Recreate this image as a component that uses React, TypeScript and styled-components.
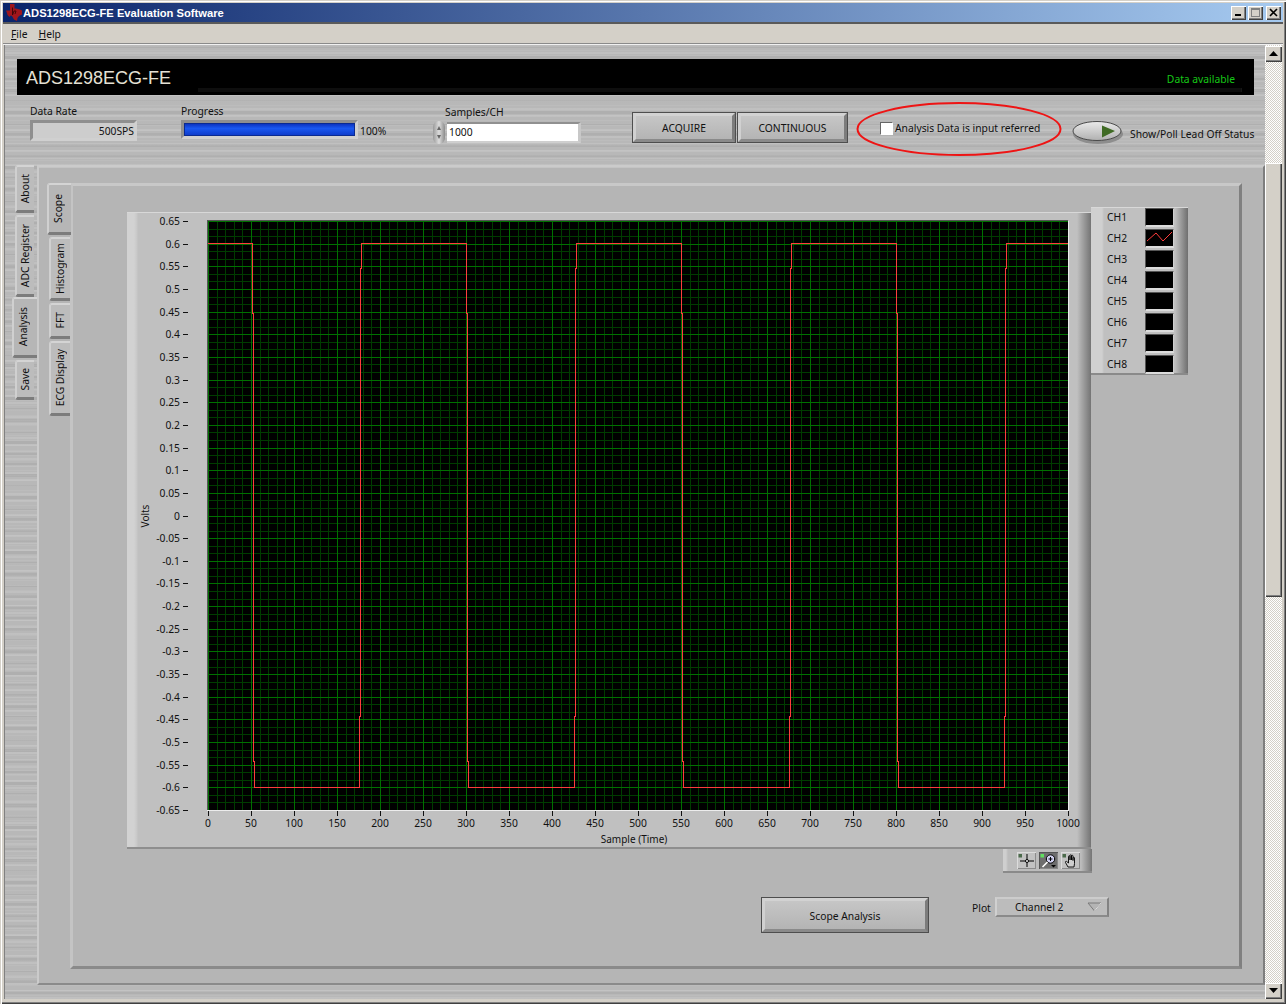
import React from "react";
import styled, { createGlobalStyle } from "styled-components";

const UI = `"Noto Sans", "DejaVu Sans", sans-serif`;
const FS = "10.3px";

const Global = createGlobalStyle`
  html, body { margin: 0; padding: 0; background: #d4d0c8; overflow: hidden; }
  * { box-sizing: border-box; }
  body { font-family: ${UI}; font-size: ${FS}; color: #111; }
`;

const Window = styled.div`
  width: 1286px; height: 1004px; background: #d4d0c8; display: flex; flex-direction: column;
  padding: 3px 3px 5px 3px;
  box-shadow: inset 1px 1px 0 #d4d0c8, inset 2px 2px 0 #fff, inset -1px -1px 0 #404040, inset -2px -2px 0 #808080;
`;
const TitleBar = styled.div`
  height: 19px; flex: none; display: flex; align-items: center; padding: 0 2px 0 3px; gap: 1px;
  background: linear-gradient(90deg, #0a246a 0%, #a6caf0 100%);
`;
const TitleText = styled.span`
  font: bold 11.2px "Liberation Sans", sans-serif; color: #fff; flex: 1; white-space: nowrap;
`;
const WinButton = styled.div<{ $gap?: number }>`
  width: 15px; height: 14px; margin-left: ${p => p.$gap ?? 1}px; background: #d4d0c8; display: flex; align-items: center; justify-content: center;
  box-shadow: inset 1px 1px 0 #fff, inset -1px -1px 0 #404040, inset -2px -2px 0 #808080;
`;
const Client = styled.div`
  flex: 1; display: flex; flex-direction: column; border-top: 2px solid #5a5a5a; min-height: 0;
`;
const MenuBar = styled.div`
  height: 20px; flex: none; display: flex; gap: 11px; align-items: center; padding-left: 8px;
  background: #d4d0c8; border-bottom: 1px solid #8a8a8a; font: ${FS} ${UI}; color: #111;
  box-shadow: 0 1px 0 #f0f0f0;
`;
const MenuItem = styled.span`
  &::first-letter { text-decoration: underline; }
`;
const Body = styled.div`
  flex: 1; display: flex; min-height: 0; margin: 1px 1px 0 1px; border-left: 1px solid #808080;
`;
const Canvas = styled.div`
  flex: 1; min-width: 0; display: flex; flex-direction: column; padding-top: 14px;
  background-color: #b8b8b8;
  background-image:
    repeating-linear-gradient(180deg, rgba(255,255,255,.11) 0 2px, transparent 2px 7px),
    repeating-linear-gradient(180deg, rgba(0,0,0,.05) 0 3px, transparent 3px 11px),
    repeating-linear-gradient(180deg, rgba(255,255,255,.06) 0 1px, transparent 1px 5px);
`;
const Banner = styled.div`
  position: relative; height: 36px; margin: 0 11px 0 12px; background: #000; flex: none;
  display: flex; align-items: center; justify-content: space-between; padding: 2px 19px 0 9px;
  &::after {
    content: ""; position: absolute; left: 181px; right: 12px; bottom: 3px; height: 4px;
    background: #0e0e0e; border-right: 1px solid #161616;
  }
`;
const BannerTitle = styled.span`
  font: 18px "Liberation Sans", sans-serif; color: #e4e0d4;
`;
const BannerStatus = styled.span`
  font: ${FS} ${UI}; color: #16c816; padding-top: 2px; position: relative; z-index: 1;
`;
const Controls = styled.div`
  position: relative; height: 70px; flex: none; display: flex; align-items: flex-start; padding-left: 25px;
`;
const Field = styled.div<{ $w: number; $mr: number; $top: number }>`
  width: ${p => p.$w}px; margin-right: ${p => p.$mr}px; margin-top: ${p => p.$top}px; flex: none;
`;
const FieldLabel = styled.div<{ $ml?: number }>`
  font: ${FS}/13px ${UI}; height: 15px; margin-left: ${p => p.$ml ?? 0}px; white-space: nowrap;
`;
const Sunken = styled.div<{ $bg: string }>`
  border: 3px solid; border-color: #8f8f8f #d0d0d0 #d0d0d0 #8f8f8f; background: ${p => p.$bg};
`;
const RateBox = styled(Sunken)`
  height: 21px; display: flex; align-items: center; justify-content: flex-end; font: ${FS} ${UI};
`;
const ProgressRow = styled.div`
  display: flex; align-items: center; gap: 2px;
`;
const ProgressTrack = styled(Sunken)`
  width: 177px; height: 19px;
`;
const ProgressFill = styled.div`
  height: 100%; border: 1px solid #0a2a90;
  background: linear-gradient(180deg, #0c34c0 0%, #1a58f0 40%, #0e3ccc 100%);
`;
const Percent = styled.span`
  font: ${FS} ${UI}; padding-top: 2px;
`;
const SpinRow = styled.div`
  display: flex; align-items: center; gap: 2px;
`;
const Spinner = styled.div`
  width: 12px; height: 23px; border-radius: 6px; background: linear-gradient(90deg, #9a9a9a, #dcdcdc 50%, #8c8c8c);
  display: flex; flex-direction: column; align-items: center; justify-content: space-around; padding: 3px 0;
`;
const SpinUp = styled.i`
  width: 0; height: 0; border-left: 2.5px solid transparent; border-right: 2.5px solid transparent; border-bottom: 4px solid #666;
`;
const SpinDown = styled.i`
  width: 0; height: 0; border-left: 2.5px solid transparent; border-right: 2.5px solid transparent; border-top: 4px solid #666;
`;
const SamplesBox = styled(Sunken)`
  width: 134px; height: 21px; font: ${FS}/16px ${UI}; padding-left: 2px; border-width: 2px 3px 2px 0; border-color: #909090 #c8c8c8 #cfcfcf #909090;
`;
const BevelButton = styled.div<{ $w: number; $h: number }>`
  width: ${p => p.$w}px; height: ${p => p.$h}px; flex: none; display: flex; align-items: center; justify-content: center;
  font: ${FS} ${UI}; color: #111; background: linear-gradient(180deg, #c6c6c6, #b4b4b4);
  border: 4px solid; border-color: #d2d2d2 #7c7c7c #8a8a8a #d0d0d0; outline: 1px solid #4e4e4e; outline-offset: -1px;
`;
const ButtonGroup = styled.div`
  display: flex; gap: 1px; margin-top: 17px; margin-right: 32px; flex: none;
`;
const CheckArea = styled.div`
  display: flex; align-items: center; gap: 2px; margin-top: 26px; margin-right: 32px; flex: none; width: 160px;
`;
const CheckBox = styled.div`
  width: 13px; height: 13px; background: #fff; flex: none;
  border: 1px solid; border-color: #666 #fff #fff #666;
`;
const CheckText = styled.span`
  font: ${FS} ${UI}; white-space: nowrap;
`;
const LeadOff = styled.div`
  display: flex; align-items: center; gap: 6px; margin-top: 25px; flex: none;
`;
const LeadText = styled.span`
  font: ${FS} ${UI}; white-space: nowrap; padding-top: 2px;
`;
const Annotation = styled.svg`
  position: absolute; left: 851px; top: 6px; pointer-events: none;
`;
const Main = styled.div`
  flex: 1; min-height: 0; display: flex; margin-bottom: 14px;
`;
const OuterTabs = styled.div`
  width: 32px; flex: none; display: flex; flex-direction: column; padding-left: 10px; align-items: flex-start;
`;
const Tab = styled.div<{ $h: number; $on?: boolean; $w: number; $ml?: number; $gap?: number }>`
  width: ${p => p.$w}px; height: ${p => p.$h}px; margin-left: ${p => p.$ml ?? 0}px; margin-bottom: ${p => p.$gap ?? 2}px; flex: none;
  display: flex; align-items: center; justify-content: center; padding-right: ${p => p.$on ? 5 : 2}px;
  background: ${p => p.$on ? "#b6b6b6" : "#bcbcbc"};
  border-top: 2px solid #d4d4d4; border-left: 2px solid #d0d0d0; border-bottom: 3px solid #7c7c7c;
  border-radius: 3px 0 0 3px; font: ${FS} ${UI}; position: relative; z-index: 1;
`;
const TabText = styled.span`
  writing-mode: vertical-rl; transform: rotate(180deg); white-space: nowrap;
`;
const OuterPanel = styled.div`
  flex: 1; min-width: 0; display: flex; background: #b5b5b5; padding: 16px 21px 14px 8px;
  border: 2px solid; border-color: #cbcbcb #7e7e7e #8a8a8a #cbcbcb; box-shadow: inset 0 1px 0 #c4c4c4;
`;
const InnerTabs = styled.div`
  width: 23px; flex: none; display: flex; flex-direction: column; align-items: flex-start;
`;
const InnerPanel = styled.div`
  flex: 1; min-width: 0; display: flex; flex-direction: column; padding: 26px 0 0 54px;
  border: 3px solid; border-color: #c8c8c8 #808080 #8a8a8a #c4c4c4; background: #b5b5b5;
`;
const GraphRow = styled.div`
  display: flex; align-items: flex-start; flex: none;
`;
const GraphColumn = styled.div`
  width: 964px; flex: none; display: flex; flex-direction: column; align-items: flex-end;
`;
const GraphPanel = styled.div`
  width: 964px; height: 637px;
  background: linear-gradient(90deg, #d2d2d2 0 7px, #c8c8c8 10px, #c0c0c0 11px, #c0c0c0 calc(100% - 14px), #747474 100%);
  border-top: 1px solid #d8d8d8; border-bottom: 2px solid #8e8e8e;
`;
const ChartSvg = styled.svg`
  display: block; margin-top: -1px; font-family: ${UI}; font-size: ${FS};
`;
const Palette = styled.div`
  width: 89px; height: 24px; margin-right: -1px; display: flex; gap: 3px; align-items: center; padding: 0 13px 0 14px;
  background: linear-gradient(90deg, #cfcfcf 0 3px, #bcbcbc 5px, #bcbcbc 78px, #757575 100%);
  border-bottom: 2px solid #8a8a8a;
`;
const PaletteButton = styled.div<{ $on?: boolean }>`
  width: 19px; height: 17px; flex: none; display: flex; align-items: center; justify-content: center;
  background: ${p => p.$on ? "#6e6e6e" : "#c2c2c2"};
  box-shadow: inset 1px 1px 0 ${p => p.$on ? "#555" : "#dcdcdc"}, inset -1px -1px 0 ${p => p.$on ? "#888" : "#8c8c8c"};
`;
const Legend = styled.div`
  width: 97px; height: 168px; margin-top: -5px; flex: none; padding: 0 14px 0 16px;
  display: flex; flex-direction: column;
  background: linear-gradient(90deg, #d0d0d0 0 11px, #c0c0c0 13px, #c0c0c0 84px, #6f6f6f 100%);
  box-shadow: inset 0 1px 0 #d8d8d8, inset 0 -2px 0 #8a8a8a;
`;
const LegendRow = styled.div`
  height: 21px; flex: none; display: flex; align-items: center; justify-content: space-between; font: ${FS} ${UI};
`;
const LegendName = styled.span`
  padding-bottom: 2px;
`;
const Swatch = styled.div`
  width: 29px; height: 19px; background: #000; border-top: 1px solid #555; border-left: 1px solid #555;
  border-bottom: 2px solid #dcdcdc; border-right: 1px solid #cfcfcf;
`;
const BottomRow = styled.div`
  display: flex; align-items: flex-start; margin: 24px 0 0 634px;
`;
const ScopeLabel = styled.span`
  padding-top: 2px;
`;
const PlotLabel = styled.span`
  font: ${FS} ${UI}; margin: 4px 0 0 43px; width: 23px;
`;
const Ring = styled.div`
  width: 114px; height: 20px; display: flex; align-items: center; justify-content: space-between; padding: 0 5px 0 18px;
  font: ${FS} ${UI}; background: #bcbcbc;
  border: 2px solid; border-color: #cccccc #828282 #8a8a8a #d0d0d0;
`;
const Scroll = styled.div`
  width: 17px; flex: none; display: flex; flex-direction: column; padding-top: 1px;
  background: repeating-conic-gradient(#fff 0 25%, #d4d0c8 0 50%) 0 0 / 2px 2px;
`;
const ScrollBtn = styled.div`
  height: 16px; flex: none; background: #d4d0c8; display: flex; align-items: center; justify-content: center;
  box-shadow: inset 1px 1px 0 #fff, inset -1px -1px 0 #404040, inset -2px -2px 0 #808080;
`;
const ScrollTrack = styled.div`
  flex: 1; min-height: 0; padding-top: 101px;
`;
const ScrollThumb = styled.div`
  height: 434px; background: #d4d0c8;
  box-shadow: inset 1px 1px 0 #fff, inset -1px -1px 0 #404040, inset -2px -2px 0 #808080;
`;

const PX = 81, PY = 9, PW = 860, PH = 589;
const xTicks = Array.from({ length: 21 }, (_, i) => i * 50);
const yTicks = Array.from({ length: 27 }, (_, i) => {
  const v = 65 - i * 5;
  return String(v / 100);
});

function trace() {
  const sx = (d: number) => PX + d * 0.86;
  const top = PY + 22.5, bot = PY + 566.5;
  const y1 = PY + 92, y2 = PY + 339, y3 = PY + 540;
  const y4 = PY + 495, y5 = PY + 249, y6 = PY + 47;
  const falls = [50.6, 300.4, 550.4, 800.4];
  const rises = [175.6, 425.4, 675.4, 925.4];
  let d = `M${PX} ${top}`;
  const all = [...falls.map(x => ({ x, f: true })), ...rises.map(x => ({ x, f: false }))].sort((a, b) => a.x - b.x);
  for (const e of all) {
    const x = Math.round(sx(e.x)) + 0.5;
    if (e.f) {
      d += `H${x}V${y1}H${x + 1}V${y2}H${x + 1}V${y3}H${x + 2}V${bot}`;
    } else {
      d += `H${x}V${y4}H${x + 1}V${y5}H${x + 1}V${y6}H${x + 2}V${top}`;
    }
  }
  d += `H${PX + PW}`;
  return d;
}

function Chart() {
  const vMinor: number[] = [], vMajor: number[] = [];
  for (let i = 0; i <= 100; i++) {
    const x = Math.round(PX + i * 8.6) + 0.5;
    if (i % 5 === 0) vMajor.push(x); else vMinor.push(x);
  }
  const hMinor: number[] = [], hMajor: number[] = [];
  for (let i = 0; i <= 78; i++) {
    const y = Math.round(PY + i * (PH / 78)) + 0.5;
    if (i % 3 === 0) hMajor.push(y); else hMinor.push(y);
  }
  return (
    <ChartSvg width={964} height={637}>
      <rect x={PX - 1} y={PY - 1} width={PW + 1} height={PH + 1} fill="#000" stroke="none" />
      <g shapeRendering="crispEdges">
        {vMinor.map(x => <line key={"vm" + x} x1={x} x2={x} y1={PY} y2={PY + PH} stroke="#003c00" />)}
        {hMinor.map(y => <line key={"hm" + y} x1={PX} x2={PX + PW} y1={y} y2={y} stroke="#003c00" />)}
        {vMajor.map(x => <line key={"vM" + x} x1={x} x2={x} y1={PY} y2={PY + PH} stroke="#007000" />)}
        {hMajor.map(y => <line key={"hM" + y} x1={PX} x2={PX + PW} y1={y} y2={y} stroke="#007000" />)}
        <path d={trace()} fill="none" stroke="#ff3c3c" />
        <path d={`M${PX - 0.5} ${PY + PH}V${PY - 0.5}H${PX + PW}`} fill="none" stroke="#555" />
        <path d={`M${PX - 1} ${PY + PH + 0.5}H${PX + PW + 0.5}V${PY}`} fill="none" stroke="#ececec" />
        {yTicks.map((_, i) => {
          const y = Math.round(PY + i * (PH / 26)) + 0.5;
          return <line key={i} x1={56} x2={61} y1={y} y2={y} stroke="#111" />;
        })}
        {xTicks.map((_, i) => {
          const x = Math.round(PX + i * 43) + 0.5;
          return <line key={i} x1={x} x2={x} y1={PY + PH + 1} y2={PY + PH + 6} stroke="#111" />;
        })}
      </g>
      {yTicks.map((t, i) => (
        <text key={t} x={53} y={PY + i * (PH / 26) + 4} textAnchor="end" fill="#111">{t}</text>
      ))}
      {xTicks.map((t, i) => (
        <text key={t} x={PX + i * 43} y={PY + PH + 17} textAnchor="middle" fill="#111">{t}</text>
      ))}
      <text x={507} y={631} textAnchor="middle" fill="#111" fontSize="10">Sample (Time)</text>
      <text transform="translate(22 304) rotate(-90)" textAnchor="middle" fill="#111" fontSize="10">Volts</text>
    </ChartSvg>
  );
}

const Logo = () => (
  <svg width="16" height="17" viewBox="0 0 16 17">
    <path d="M4 0h4.5v4.5h1.5l4 1 2 1v4l-3 1.5-1.5 2-.5 3-3-1.5-2-3.5-1.5-.5-1 1.5-2-2L1 9 0 6.5h4z" fill="#a0161c" />
    <path d="M6.5 3.5v7.5l1.5-4h2l-1 3" stroke="#3a0608" strokeWidth="0.9" fill="none" />
  </svg>
);

const Led = ({ on }: { on?: boolean }) => (
  <rect x="0.5" y="1" width="3.5" height="3.5" fill={on ? "#5fe05f" : "#4b6b4b"} />
);

const Channels = ["CH1", "CH2", "CH3", "CH4", "CH5", "CH6", "CH7", "CH8"];

export default function App() {
  return (
    <Window>
      <Global />
      <TitleBar>
        <Logo />
        <TitleText>ADS1298ECG-FE Evaluation Software</TitleText>
        <WinButton>
          <svg width="9" height="9"><rect x="1" y="6" width="6" height="2" fill="#000" /></svg>
        </WinButton>
        <WinButton>
          <svg width="9" height="9"><rect x="0.5" y="0.5" width="8" height="8" fill="none" stroke="#808080" /><rect x="0" y="0" width="9" height="2" fill="#808080" /></svg>
        </WinButton>
        <WinButton $gap={2}>
          <svg width="9" height="9"><path d="M1 1l7 7M8 1l-7 7" stroke="#000" strokeWidth="1.6" /></svg>
        </WinButton>
      </TitleBar>
      <Client>
        <MenuBar>
          <MenuItem>File</MenuItem>
          <MenuItem>Help</MenuItem>
        </MenuBar>
        <Body>
          <Canvas>
            <Banner>
              <BannerTitle>ADS1298ECG-FE</BannerTitle>
              <BannerStatus>Data available</BannerStatus>
            </Banner>
            <Controls>
              <Field $w={107} $mr={44} $top={10}>
                <FieldLabel>Data Rate</FieldLabel>
                <RateBox $bg="#cdcdcd">500SPS</RateBox>
              </Field>
              <Field $w={207} $mr={45} $top={10}>
                <FieldLabel>Progress</FieldLabel>
                <ProgressRow>
                  <ProgressTrack $bg="#9a9a9a"><ProgressFill /></ProgressTrack>
                  <Percent>100%</Percent>
                </ProgressRow>
              </Field>
              <Field $w={148} $mr={51} $top={11}>
                <FieldLabel $ml={12}>Samples/CH</FieldLabel>
                <SpinRow>
                  <Spinner><SpinUp /><SpinDown /></Spinner>
                  <SamplesBox $bg="#fff">1000</SamplesBox>
                </SpinRow>
              </Field>
              <ButtonGroup>
                <BevelButton $w={104} $h={31}>ACQUIRE</BevelButton>
                <BevelButton $w={111} $h={31}>CONTINUOUS</BevelButton>
              </ButtonGroup>
              <CheckArea>
                <CheckBox />
                <CheckText>Analysis Data is input referred</CheckText>
              </CheckArea>
              <LeadOff>
                <svg width="52" height="25" viewBox="0 0 52 25">
                  <ellipse cx="26" cy="14" rx="25" ry="10" fill="#7a7a7a" opacity="0.7" />
                  <defs>
                    <linearGradient id="sw" x1="0" y1="0" x2="0" y2="1">
                      <stop offset="0" stopColor="#eaeaea" />
                      <stop offset="1" stopColor="#b0b0b0" />
                    </linearGradient>
                  </defs>
                  <ellipse cx="25" cy="11" rx="24" ry="9.5" fill="url(#sw)" stroke="#4a4a4a" />
                  <path d="M30 5.5l13 5.5-13 6.5z" fill="#3f6a24" />
                </svg>
                <LeadText>Show/Poll Lead Off Status</LeadText>
              </LeadOff>
              <Annotation width="207" height="56">
                <ellipse cx="103" cy="28" rx="101.5" ry="26" fill="none" stroke="#ee1414" strokeWidth="2" />
              </Annotation>
            </Controls>
            <Main>
              <OuterTabs>
                <Tab $w={19} $h={48}><TabText>About</TabText></Tab>
                <Tab $w={19} $h={82} $gap={0}><TabText>ADC Register</TabText></Tab>
                <Tab $w={25} $h={61} $ml={-3} $on><TabText>Analysis</TabText></Tab>
                <Tab $w={19} $h={40}><TabText>Save</TabText></Tab>
              </OuterTabs>
              <OuterPanel>
                <InnerTabs>
                  <Tab $w={24} $h={52} $on><TabText>Scope</TabText></Tab>
                  <Tab $w={21} $h={64} $ml={2}><TabText>Histogram</TabText></Tab>
                  <Tab $w={21} $h={36} $ml={2}><TabText>FFT</TabText></Tab>
                  <Tab $w={21} $h={75} $ml={2}><TabText>ECG Display</TabText></Tab>
                </InnerTabs>
                <InnerPanel>
                  <GraphRow>
                    <GraphColumn>
                      <GraphPanel><Chart /></GraphPanel>
                      <Palette>
                        <PaletteButton>
                          <svg width="17" height="15" viewBox="0 0 17 15">
                            <Led />
                            <path d="M9 1v13M2 8h14" stroke="#000" strokeWidth="1" />
                            <circle cx="9" cy="8" r="1.5" fill="#fff" stroke="#000" />
                          </svg>
                        </PaletteButton>
                        <PaletteButton $on>
                          <svg width="17" height="15" viewBox="0 0 17 15">
                            <Led on />
                            <circle cx="10.5" cy="6" r="4.2" fill="#d4d4f4" stroke="#000" />
                            <path d="M8.5 6h4M10.5 4v4" stroke="#000" />
                            <path d="M7.5 9L2.5 14" stroke="#fff" strokeWidth="1.6" />
                            <path d="M11 12h5l-2.5 2.5z" fill="#000" />
                          </svg>
                        </PaletteButton>
                        <PaletteButton>
                          <svg width="17" height="15" viewBox="0 0 17 15">
                            <Led />
                            <path d="M6 14L3.5 9.5c-.6-1 .8-1.6 1.5-.7L6.5 10V3.5c0-1 1.5-1 1.5 0V7V2.5c0-1 1.5-1 1.5 0V7V3c0-1 1.5-1 1.5 0v4.5V5c0-1 1.5-1 1.5 0v5.5L12 14z" fill="#cfcfcf" stroke="#000" strokeWidth="0.9" />
                          </svg>
                        </PaletteButton>
                      </Palette>
                    </GraphColumn>
                    <Legend>
                      {Channels.map(c => (
                        <LegendRow key={c}>
                          <LegendName>{c}</LegendName>
                          <Swatch>
                            {c === "CH2" && (
                              <svg width="27" height="16" viewBox="0 0 27 16" style={{ display: "block" }}>
                                <path d="M1 11L10 3l7 8 9-9" fill="none" stroke="#ff3c3c" />
                              </svg>
                            )}
                          </Swatch>
                        </LegendRow>
                      ))}
                    </Legend>
                  </GraphRow>
                  <BottomRow>
                    <BevelButton $w={168} $h={36}><ScopeLabel>Scope Analysis</ScopeLabel></BevelButton>
                    <PlotLabel>Plot</PlotLabel>
                    <Ring>
                      <span>Channel 2</span>
                      <svg width="15" height="10" viewBox="0 0 15 10">
                        <path d="M1 1h13L7.5 9z" fill="#b4b4b4" stroke="#7a7a7a" />
                        <path d="M14 1L7.5 9" stroke="#e0e0e0" fill="none" />
                      </svg>
                    </Ring>
                  </BottomRow>
                </InnerPanel>
              </OuterPanel>
            </Main>
          </Canvas>
          <Scroll>
            <ScrollBtn>
              <svg width="9" height="6"><path d="M4.5 0L9 5H0z" fill="#000" /></svg>
            </ScrollBtn>
            <ScrollTrack><ScrollThumb /></ScrollTrack>
            <ScrollBtn>
              <svg width="9" height="6"><path d="M0 0h9L4.5 5z" fill="#000" /></svg>
            </ScrollBtn>
          </Scroll>
        </Body>
      </Client>
    </Window>
  );
}
